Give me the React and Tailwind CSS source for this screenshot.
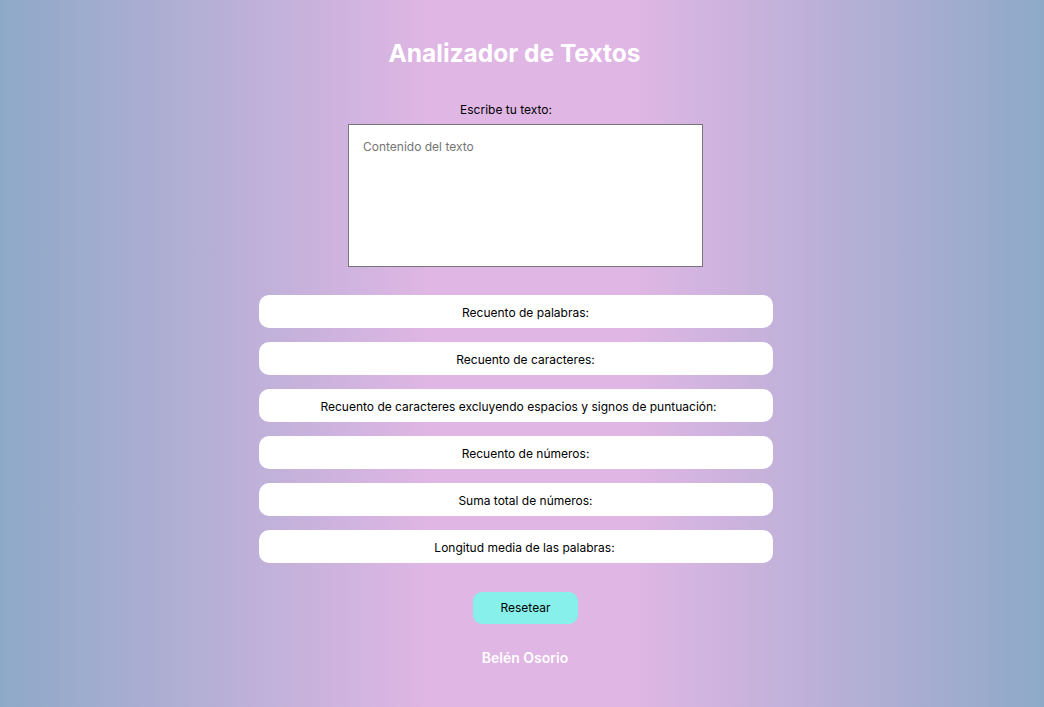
import React, { useState } from 'react';

const stats = [
  { label: 'Recuento de palabras:', pad: 'pl-[19px]' },
  { label: 'Recuento de caracteres:', pad: 'pl-[19px]' },
  { label: 'Recuento de caracteres excluyendo espacios y signos de puntuación:', pad: 'pl-[5px]' },
  { label: 'Recuento de números:', pad: 'pl-[19px]' },
  { label: 'Suma total de números:', pad: 'pl-[19px]' },
  { label: 'Longitud media de las palabras:', pad: 'pl-[17px]' },
];

const App = () => {
  const [text, setText] = useState('');

  return (
    <div
      className="min-h-screen w-full bg-[linear-gradient(to_right,#8ea9c8_0%,#dfb6e4_41%,#dfb6e4_61%,#8ea9c8_100%)] flex flex-col items-center text-black"
      style={{ fontFamily: 'Inter, "Noto Sans", sans-serif' }}
    >
      {/* Header */}
      <h1 className="mt-[36px] mr-[15px] text-[24.5px] leading-[34px] font-bold text-white">Analizador de Textos</h1>

      {/* Input */}
      <div className="mt-[30px] flex flex-col items-center">
        <label className="mr-[32px] text-[12px] leading-[20px]">Escribe tu texto:</label>
        <textarea
          value={text}
          onChange={(e) => setText(e.target.value)}
          placeholder="Contenido del texto"
          className="mt-[4px] ml-[7px] w-[355px] h-[143px] bg-white border border-[#767676] px-[14px] py-[13px] text-[12px] leading-[18px] placeholder:text-[#757575] resize-none outline-none"
        />
      </div>

      {/* Stats */}
      <ul className="mt-[28px] mr-[12px] flex flex-col gap-[14px]">
        {stats.map((s) => (
          <li
            key={s.label}
            className={`w-[514px] h-[33px] bg-white rounded-[10px] flex items-center justify-center pt-[3px] text-[12px] ${s.pad}`}
          >
            {s.label}
          </li>
        ))}
      </ul>

      <button
        onClick={() => setText('')}
        className="mt-[29px] ml-[7px] w-[105px] h-[32px] rounded-[9px] bg-[#88f0ea] text-[12px]"
      >
        Resetear
      </button>

      <p className="mt-[23px] ml-[6px] text-[14px] font-semibold text-white">Belén Osorio</p>
    </div>
  );
};

export default App;
